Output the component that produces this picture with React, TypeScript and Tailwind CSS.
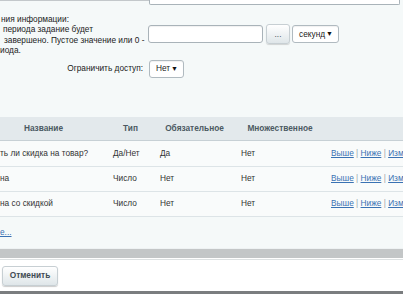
import React from "react";

function Select({ label, w }: { label: string; w: string }) {
  return (
    <div
      className={`${w} h-[18px] flex items-center justify-between pl-[6px] pr-[5px] bg-white border border-[#b0bac0] rounded-[3px] shadow-[inset_0_1px_1px_rgba(0,0,0,0.06)]`}
    >
      <span>{label}</span>
      <span className="text-[7px] leading-none text-[#111]">▼</span>
    </div>
  );
}

const rows = [
  { name: "ть ли скидка на товар?", type: "Да/Нет", req: "Да", mult: "Нет", h: "h-[26px]" },
  { name: "на", type: "Число", req: "Нет", mult: "Нет", h: "h-[25px]" },
  { name: "на со скидкой", type: "Число", req: "Нет", mult: "Нет", h: "h-[25px]" },
];

export default function App() {
  return (
    <div className="w-[403px] h-[294px] overflow-hidden bg-[#f5f9f9] text-[8.3px] leading-[10.3px] text-[#222] font-['Liberation_Sans',Arial,sans-serif] flex flex-col">
      {/* top cut row */}
      <div className="flex h-[6px] shrink-0">
        <div className="w-[149px] h-[1px] bg-[#c3c8cb]" />
        <div className="w-[251px] h-[5px] bg-white border border-t-0 border-[#a9b3b9] rounded-b-[2px]" />
      </div>

      {/* period row */}
      <div className="flex items-center mt-[6px] shrink-0">
        <div className="w-[148px] whitespace-nowrap pt-[2px] leading-[10.4px]">
          <div className="pl-[1px]">ния информации:</div>
          <div className="pl-[3px]">периода задание будет</div>
          <div className="pl-[4px]">завершено. Пустое значение или 0 -</div>
          <div>иода.</div>
        </div>
        <div className="w-[115px] h-[18px] bg-white border border-[#a9b3b9] rounded-[3px] shadow-[inset_0_1px_1px_rgba(0,0,0,0.06)]" />
        <div className="ml-[3px] w-[24px] h-[20px] flex items-end justify-center pb-[4px] rounded-[3px] border border-[#c7cfd3] bg-gradient-to-b from-[#ffffff] to-[#dfe6e9] shadow-[0_1px_1px_rgba(0,0,0,0.15)] text-[#4b5962]">
          ...
        </div>
        <div className="ml-[2px]">
          <Select label="секунд" w="w-[47px]" />
        </div>
      </div>

      {/* access row */}
      <div className="flex items-center mt-[4px] shrink-0">
        <div className="w-[143px] text-right">Ограничить доступ:</div>
        <div className="ml-[6px]">
          <Select label="Нет" w="w-[35px]" />
        </div>
      </div>

      {/* table */}
      <div className="mt-[39px] shrink-0">
        <div className="flex items-center h-[24px] bg-[#e3e9ec] border-b border-[#c7d0d5] font-bold text-[#4b5962] whitespace-nowrap">
          <div className="ml-[-20px] w-[127px] text-center">Название</div>
          <div className="w-[47px] text-center">Тип</div>
          <div className="w-[81px] text-center">Обязательное</div>
          <div className="w-[90px] text-center">Множественное</div>
          <div className="flex-1" />
        </div>
        {rows.map((r, i) => (
          <div
            key={i}
            className={`flex items-center ${r.h} border-b border-[#dde4e7] bg-[#f9fbfb] whitespace-nowrap text-[#333]`}
          >
            <div className="w-[107px]">{r.name}</div>
            <div className="w-[47px] pl-[6px]">{r.type}</div>
            <div className="w-[81px] pl-[6px]">{r.req}</div>
            <div className="w-[90px] pl-[6px]">{r.mult}</div>
            <div className="flex-1 pl-[6px] overflow-hidden text-[#9aa5ab]">
              <a className="text-[#3a72b3] underline">Выше</a> | <a className="text-[#3a72b3] underline">Ниже</a> |{" "}
              <a className="text-[#3a72b3] underline">Изменить</a>
            </div>
          </div>
        ))}
      </div>

      {/* add link row */}
      <div className="h-[31px] shrink-0 flex items-center">
        <a className="text-[#3a72b3] underline">е...</a>
      </div>

      {/* footer */}
      <div className="h-[1px] bg-[#eef2f3] shrink-0" />
      <div className="h-[9px] bg-[#c3c6c7] shrink-0" />
      <div className="h-[1px] bg-white shrink-0" />
      <div className="h-[1px] bg-[#dde1e2] shrink-0" />
      <div className="flex-1 bg-white pt-[6px] pl-[2px]">
        <div className="w-[56px] h-[20px] flex items-center justify-center rounded-[3px] border border-[#c7cfd3] bg-gradient-to-b from-[#ffffff] to-[#dfe6e9] shadow-[0_1px_1px_rgba(0,0,0,0.2)] font-bold text-[#3f4b54]">
          Отменить
        </div>
      </div>
      <div className="h-[3px] bg-[#7a7d7f] shrink-0" />
    </div>
  );
}
